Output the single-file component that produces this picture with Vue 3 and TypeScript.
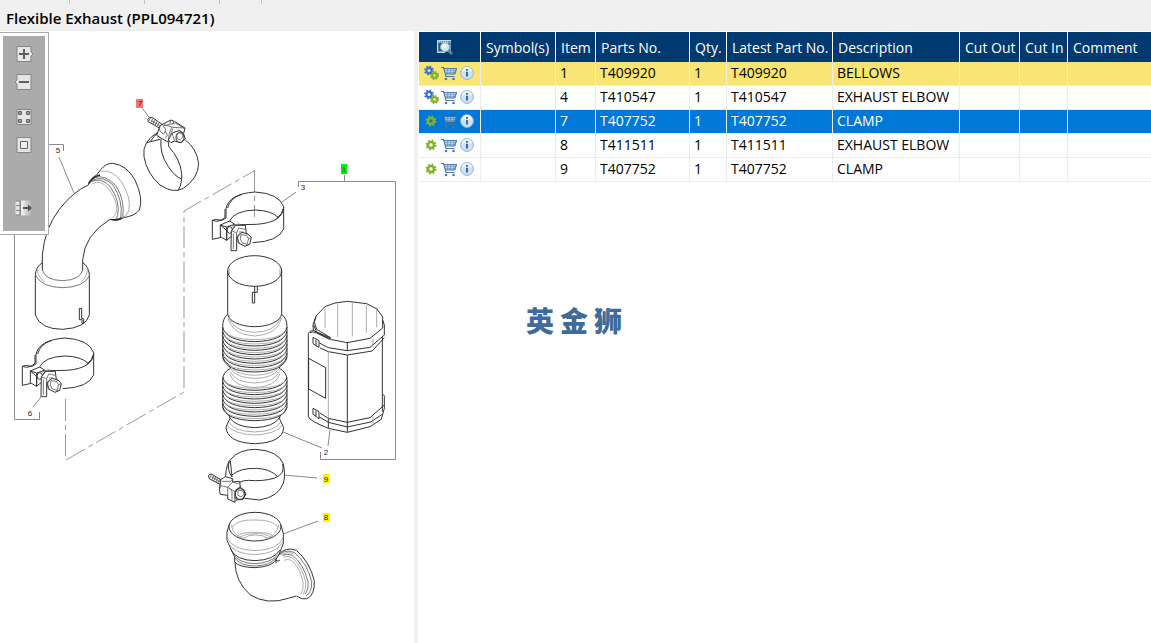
<script setup lang="ts">
interface Part {
  item: number
  part: string
  qty: number
  latest: string
  description: string
  assembly: boolean
  state: '' | 'marked' | 'selected'
}

const parts: Part[] = [
  { item: 1, part: 'T409920', qty: 1, latest: 'T409920', description: 'BELLOWS', assembly: true, state: 'marked' },
  { item: 4, part: 'T410547', qty: 1, latest: 'T410547', description: 'EXHAUST ELBOW', assembly: true, state: '' },
  { item: 7, part: 'T407752', qty: 1, latest: 'T407752', description: 'CLAMP', assembly: false, state: 'selected' },
  { item: 8, part: 'T411511', qty: 1, latest: 'T411511', description: 'EXHAUST ELBOW', assembly: false, state: '' },
  { item: 9, part: 'T407752', qty: 1, latest: 'T407752', description: 'CLAMP', assembly: false, state: '' },
]

const headings: string[] = [
  'Symbol(s)', 'Item', 'Parts No.', 'Qty.', 'Latest Part No.', 'Description', 'Cut Out', 'Cut In', 'Comment',
]

const watermark: string[] = ['英', '金', '狮']

// Depths of the bellows convolutions, in drawing units.
const upperRings: number[] = [246, 259, 272, 285, 298, 311, 324, 337]
const lowerRings: number[] = upperRings.map((y) => y + 150)
const clampOffsets: string[] = ['translate(0 320)', 'translate(190 174)']
</script>

<template>
  <div class="page">
    <header class="title-bar">
      <div class="tabs"><i class="tab first"></i><i class="tab"></i><i class="tab"></i><i class="tab short"></i></div>
      <h1>Flexible Exhaust (PPL094721)</h1>
    </header>

    <main class="split">
      <section class="drawing">
        <svg class="diagram" viewBox="0 31 414 612" role="img" aria-label="Exploded view of the flexible exhaust">
          <!-- assembly brackets and centre lines -->
          <g class="lead">
            <path d="M14.500 200V419.500H39.500V412M40 144.500H63.500V151M298.500 187V181.500H395.500V459.500H320.500V452M344.500 175V181" />
            <path d="M282 202L296 192M59 157L74 193M142 108L149 117M41 397L33 407M283 432L322 448M330 430L328 446M284 475L317 478M283 534L318 521" />
          </g>
          <g class="centre">
            <path d="M65.500 399V459" /><path d="M66 460L184 392V211L254 171" /><path d="M254.500 170V217" />
          </g>

          <!-- 7: clamp -->
          <g transform="translate(130 90) scale(.33333)">
            <path d="M82 128Q62 140 50 157Q38 178 42 200Q50 250 90 285Q130 312 160 295Q205 265 206 220Q200 175 166 150" />
            <path d="M93 146Q88 190 115 230Q135 260 155 267M116 152V170Q150 205 155 250Q157 280 145 300M50 158L90 148M82 128Q72 140 62 153" />
            <path class="body" d="M55 95Q50 88 59 82L69 84L98 104L88 114Z" />
            <path class="mid" d="M61 84L56 94M68 86L63 98M74 90L69 102M81 94L76 105M87 99L82 109M64 91L90 107" />
            <path class="body" d="M90 107L123 90L133 94L165 114L161 131L134 126L114 156L93 144L80 136Z" />
            <path class="mid" d="M98 108L136 99L164 116M102 104L129 112L165 114M126 111L118 130L114 156M90 110Q84 125 101 132L107 122Q108 112 98 109M133 94L127 102M123 90L119 101M105 122L112 135L106 145M129 116L121 134" />
            <path class="body" d="M126 130L148 121L160 130L166 147L151 158L134 153L123 158L115 150Z" />
            <ellipse cx="150" cy="142" rx="12" ry="16" /><path class="mid" d="M140 137L145 129L156 130L158 141L151 150L142 147ZM126 130L134 153" />
          </g>

          <!-- 5: elbow -->
          <g transform="translate(20 150) scale(.33333)">
            <path d="M67 360V315Q74 235 118 178Q158 126 205 105M188 362V330Q193 255 270 208" />
            <path d="M205 105Q208 87 230 75L243 58Q257 40 278 40Q320 45 345 90Q371 145 358 180Q345 198 310 203Q292 215 270 208" />
            <path class="heavy" d="M206 101Q216 82 240 75M273 208Q290 212 306 204" />
            <path class="mid" d="M210 97Q242 79 270 109Q302 155 293 196L288 208M216 91Q248 75 279 105Q311 154 302 204M225 82Q254 73 288 107Q316 152 308 203" />
            <path class="fine" d="M217 101Q242 88 265 115Q294 157 290 182Q287 197 278 204M243 64Q279 57 307 99Q335 147 326 183Q320 199 306 203" />
            <path d="M67 338Q46 352 46 377V495Q61 538 128 538Q198 534 208 495V372Q205 349 188 338" />
            <path class="mid" d="M67 360Q76 391 128 392Q180 390 188 361M46 375Q65 412 128 413Q190 412 208 378" />
            <path class="fine" d="M51 358Q57 386 75 396M203 356Q200 383 184 395" />
            <path d="M178 475H185V506H191V521H186V509H178Z" />
          </g>

          <!-- 6 and 3: clamps -->
          <g v-for="offset in clampOffsets" :key="offset" :transform="offset">
            <g transform="scale(.33333)">
              <path d="M108 132V105Q115 60 195 54Q267 58 281 98V165Q265 203 188 206M281 98Q280 145 200 151L150 152Q134 154 130 163M113 102Q120 72 156 61" />
              <path d="M118 142Q133 110 195 108Q243 109 266 131M260 134Q278 118 280 104" />
              <path class="body" d="M108 132Q98 142 88 138Q75 134 67 139V196L94 190L110 199V169L91 153L119 141" />
              <path d="M67 139Q80 145 93 139L105 130V105M91 153V190M119 141L136 152L130 170M91 153L110 159L133 151M110 159V199L123 188" />
              <ellipse cx="119" cy="168" rx="8" ry="10" />
              <path class="body" d="M124 171L137 154H166L169 180L140 187V230H123Z" /><path class="mid" d="M124 171L140 176V187M140 176L146 162L166 166M126 157L145 150L166 154M130 178V225" />
              <path class="body" d="M142 188L156 175L174 180L184 191L179 211L165 217L145 207Z" />
              <path class="mid" d="M153 182L169 184L176 194L171 211L157 207L151 195ZM169 184L174 180M176 194L184 191M171 211L179 211M149 178Q137 193 149 209M147 174H159" />
            </g>
          </g>

          <!-- 1: bellows -->
          <g transform="translate(210 245) scale(.33333)">
            <ellipse cx="134" cy="78" rx="81" ry="46" /><path class="fine" d="M58 70V90M210 70V90" />
            <path d="M53 78V205A81 40 0 0 0 215 205V78M134 124V142H127V174H134V142H142V124" />
            <path d="M53 208Q38 220 38 245V335Q42 351 58 360L61 370Q38 382 38 405V486Q42 501 58 512M215 208Q231 220 231 245V335Q227 351 211 360L208 370Q231 382 231 405V486Q227 501 211 512" />
            <path class="fine" d="M58 211V222Q75 260 134 262Q193 260 211 222V211M54 220Q66 270 134 273Q203 269 215 220" />
            <path v-for="y in upperRings" :key="y" :d="`M38 ${y}Q47 ${y + 42} 134 ${y + 44}Q221 ${y + 42} 231 ${y}`" />
            <path v-for="y in upperRings" :key="'f' + y" class="fine" :d="`M43 ${y + 12}Q60 ${y + 37} 134 ${y + 38}Q208 ${y + 37} 226 ${y + 12}`" />
            <path class="fine" d="M58 359Q72 389 134 391Q196 389 211 359M61 370Q77 399 134 400Q191 399 208 370M61 380Q75 412 134 414Q195 412 208 380M59 386Q72 426 134 428Q197 426 210 386" />
            <path v-for="y in lowerRings" :key="'l' + y" :d="`M38 ${y}Q47 ${y + 38} 134 ${y + 40}Q221 ${y + 38} 231 ${y}`" />
            <path v-for="y in lowerRings" :key="'g' + y" class="fine" :d="`M43 ${y + 12}Q60 ${y + 33} 134 ${y + 34}Q208 ${y + 33} 226 ${y + 12}`" />
            <path d="M58 511L60 520L48 546Q51 593 134 596Q218 593 221 548L208 520L211 511M59 518Q77 546 134 548Q190 546 209 518" />
            <path class="fine" d="M55 530Q72 559 134 561Q197 559 213 530M51 541Q70 567 134 570Q199 567 217 541" />
          </g>

          <!-- 2: heat shield -->
          <g transform="translate(210 245) scale(.33333)">
            <path d="M310 257L309 239L318 213L345 185L375 174L412 169L470 176L501 192L518 216V249L480 280L412 293L365 284L320 262L311 240M318 215L313 232L320 253L362 278" />
            <path d="M295 268Q296 257 311 257L362 279M295 268V515Q298 527 355 550L412 562L480 545L514 523L523 490V452L517 447M300 263Q306 258 320 264L361 284" />
            <path d="M518 225L523 240V270L480 307L412 317L355 308L328 294M523 278L487 318L412 330L355 320L330 309M517 275V500M412 293V317" />
            <path d="M330 504L355 520L412 532L480 518L523 480M328 516L355 532L412 546L482 531L518 507M412 530V562M355 520V550" />
            <path d="M309 277V296L318 302M309 277L327 287V307L318 302V284M309 490V508L318 514M309 490L327 500V522L318 514V497" />
            <path class="fine" d="M345 190V250M383 176V276M427 172V274M469 180V264M500 193V247M355 321V520M489 281V308M489 514V541" />
            <path d="M412 330V531" />
            <path d="M296 340L347 368V460L296 432Z" />
          </g>

          <!-- 9: clamp -->
          <g transform="translate(200 440) scale(.33333)">
            <path d="M77 110Q78 72 93 57Q118 28 167 28Q235 32 250 72Q257 105 250 130Q235 170 180 180L133 175M248 72Q256 102 224 114Q190 125 145 121Q128 121 115 129M96 105Q120 84 170 85Q210 87 231 108M88 63Q80 90 96 111M91 62Q93 81 96 111" />
            <path class="body" d="M25 108Q28 99 36 103L62 119V134L29 117Z" />
            <path class="mid" d="M34 105L29 115M41 108L36 119M47 111L42 122M53 114L48 126M59 118L54 130M34 110L60 125" />
            <path class="body" d="M62 119L76 110L98 116V126L119 124L122 148L105 155V187L83 177V166L61 163L58 150Z" />
            <path class="mid" d="M62 119V137L83 142L98 126M62 137L58 150M83 142V177M83 142L105 155L121 138M98 116L92 124H65M98 126L118 132M88 146L96 153V182M105 187L114 175" />
            <path class="body" d="M108 149L121 142L132 150L138 162L129 178L112 180L105 169Z" /><ellipse cx="120" cy="162" rx="14" ry="16" /><path class="mid" d="M114 151L127 152L133 162L124 171L114 166Z" />
          </g>

          <!-- 8: elbow -->
          <g transform="translate(200 440) scale(.33333)">
            <ellipse cx="165" cy="260" rx="78" ry="43" /><path class="fine" d="M94 255Q100 288 135 298M236 255Q230 288 195 298" />
            <path d="M87 255Q78 276 81 301L97 337L104 350V366Q118 382 165 383Q215 380 226 361L237 344L250 310V280L243 255" />
            <path class="fine" d="M96 262Q110 238 165 240Q220 239 234 262M110 289Q130 275 165 277Q203 275 220 289M118 292Q139 279 165 281Q195 279 213 292M128 296Q146 284 165 285Q188 284 205 295" />
            <path class="fine" d="M81 292Q95 330 165 332Q236 330 250 292M83 306Q100 342 165 344Q232 340 248 306" />
            <path d="M92 328Q108 361 165 362Q222 360 240 330" />
            <path class="mid" d="M98 340Q115 370 165 371Q214 368 233 345M104 354Q120 377 165 378Q210 376 225 356" />
            <path d="M105 366Q105 424 151 465Q202 496 265 475L290 468M228 353V370M228 361Q235 366 240 360M235 345Q256 319 289 331Q329 365 343 422Q345 466 321 476Q307 480 291 469" />
            <path class="mid" d="M241 342Q258 327 284 338Q321 370 335 424Q337 456 318 468M247 346Q261 339 278 346Q310 371 324 425Q326 451 315 462" />
            <path class="fine" d="M250 352Q267 345 282 358Q307 382 317 426Q319 448 310 463M252 361Q269 354 281 367Q300 386 309 426Q312 446 303 463M241 344Q260 334 281 340" />
          </g>

          <!-- callout numbers -->
          <rect x="136" y="99" width="7" height="9" fill="#f77474" /><rect x="341" y="164" width="6" height="10" fill="#00f400" />
          <rect x="323" y="474" width="7" height="9" fill="#fff200" /><rect x="323" y="513" width="7" height="9" fill="#fff200" />
          <g class="numbers">
            <text x="58" y="153">5</text><text x="30" y="416">6</text><text x="303" y="190">3</text><text x="326" y="455">2</text>
            <text x="140" y="106">7</text><text x="344" y="172">1</text><text x="326" y="482">9</text><text x="326" y="520">8</text>
          </g>
        </svg>

        <div class="tool-frame">
          <div class="tools" role="toolbar" aria-label="Drawing tools">
            <div class="tool-group">
              <button type="button" aria-label="Zoom in">
                <svg viewBox="0 0 17 16"><path class="tile" d="M1 .500H15V6L17 8L15 10V15.500H1Z" /><path class="glyph" d="M3 8H13M8 3V13" /></svg>
              </button>
              <button type="button" aria-label="Zoom out">
                <svg viewBox="0 0 17 16"><path class="tile" d="M1 .500H15V15.500H1V10L-1 8L1 6Z" /><path class="glyph" d="M3 8H13" /></svg>
              </button>
            </div>
            <div class="tool-group">
              <button type="button" aria-label="Show all">
                <svg viewBox="0 0 17 16"><path class="tile" d="M1 .500H15V15.500H1Z" /><path class="box" d="M2.500 2.500H5.500V5.500H2.500ZM10.500 2.500H13.500V5.500H10.500ZM2.500 10.500H5.500V13.500H2.500ZM10.500 10.500H13.500V13.500H10.500Z" /></svg>
              </button>
              <button type="button" aria-label="Fit to window">
                <svg viewBox="0 0 17 16"><path class="tile" d="M1 .500H15V15.500H1Z" /><path d="M4.500 4.500H11.500V11.500H4.500Z" fill="#eee" stroke="#666" /></svg>
              </button>
            </div>
            <div class="tool-group last">
              <button type="button" aria-label="Hide panel">
                <svg viewBox="0 0 17 16">
                  <defs><linearGradient id="fade"><stop offset="0" stop-color="#f4f4f4" /><stop offset="1" stop-color="#ababab" /></linearGradient></defs>
                  <path d="M5 .500H16V15.500H5Z" fill="url(#fade)" /><path d="M-.500 1H4V15H-.500M0 5.500H4M0 10.500H4M4.500 .500V15.500" fill="#e4e4e4" stroke="#888" />
                  <path d="M7 8H14" stroke="#555" stroke-width="2" /><path d="M12 4.500L16 8L12 11.500Z" fill="#555" />
                </svg>
              </button>
            </div>
          </div>
        </div>
      </section>

      <section class="list">
        <table>
          <colgroup>
            <col class="w-icons" /><col class="w-symbols" /><col class="w-item" /><col class="w-part" /><col class="w-qty" />
            <col class="w-latest" /><col class="w-description" /><col class="w-out" /><col class="w-in" /><col />
          </colgroup>
          <thead>
            <tr>
              <th class="search">
                <button type="button" aria-label="Search parts">
                  <svg width="18" height="18" viewBox="0 0 18 18">
                    <path d="M1 2H15V14H1Z" fill="#6f9db5" /><path d="M2.500 5H13.500V13H2.500Z" fill="#1f5d85" />
                    <path d="M1.500 2V14.500H9M1 2.500H15" fill="none" stroke="#c5dce8" /><path d="M3 4H12" stroke="#f4fafc" stroke-dasharray="1 1" />
                    <path d="M12 12L16 16" stroke="#5f8aa3" stroke-width="2.500" /><circle cx="9" cy="9" r="4.500" fill="#d9e2e8" stroke="#8fb0c2" /><circle cx="8" cy="8" r="2" fill="#fff" />
                  </svg>
                </button>
              </th>
              <th v-for="heading in headings" :key="heading">{{ heading }}</th>
            </tr>
          </thead>
          <tbody>
            <tr v-for="row in parts" :key="row.item" :class="row.state">
              <td class="icons">
                <div class="actions">
                  <svg v-if="row.assembly" width="15" height="16" viewBox="0 0 15 16" aria-label="Assembly">
                    <g fill="none" stroke="#3b70cf"><circle cx="5" cy="5.500" r="2.600" stroke-width="2.200" /><circle cx="5" cy="5.500" r="4.200" stroke-width="1.500" stroke-dasharray="1.650 1.650" /></g>
                    <g fill="none" stroke="#83ae2e"><circle cx="10.500" cy="10.500" r="2.400" stroke-width="2.200" /><circle cx="10.500" cy="10.500" r="3.900" stroke-width="1.500" stroke-dasharray="1.530 1.530" /></g>
                  </svg>
                  <svg v-else width="15" height="16" viewBox="0 0 15 16" aria-label="Part">
                    <g fill="none" stroke="#83b32c"><circle cx="7" cy="8" r="3" stroke-width="2.600" /><circle cx="7" cy="8" r="4.600" stroke-width="1.800" stroke-dasharray="1.806 1.806" /></g>
                  </svg>
                  <button type="button" aria-label="Add to cart">
                    <svg class="cart" width="16" height="16" viewBox="0 0 16 16">
                      <path d="M3 3.500H15L13.500 9H4.800Z" fill="#c3d6ea" /><path d="M3.500 5.500H14.500M4.500 7.500H14M6.500 3.500V9M9.500 3.500V9M12.500 3.500V9" fill="none" stroke="#6f97c4" stroke-width=".7" />
                      <path class="rail" d="M0 2.500H2.500L5 11.500H13.500M3 3.500H15.500L13.800 9H4.500" />
                      <circle cx="5" cy="14" r="1.300" fill="#4f79a8" /><circle cx="12.500" cy="14" r="1.300" fill="#4f79a8" />
                    </svg>
                  </button>
                  <button type="button" aria-label="Part information">
                    <svg width="14" height="14" viewBox="0 0 14 14"><circle cx="7" cy="7" r="6.400" fill="#cfe2f1" stroke="#91b5d3" /><path d="M2 6A5 5 0 0 1 12 6Q7 3.500 2 6" fill="#eef6fb" /><path d="M7 6V10.500M7 3V4.800" stroke="#3a6aa0" stroke-width="2" /></svg>
                  </button>
                </div>
              </td>
              <td></td>
              <td>{{ row.item }}</td>
              <td>{{ row.part }}</td>
              <td>{{ row.qty }}</td>
              <td>{{ row.latest }}</td>
              <td>{{ row.description }}</td>
              <td></td>
              <td></td>
              <td></td>
            </tr>
          </tbody>
        </table>
        <p class="watermark"><span v-for="glyph in watermark" :key="glyph">{{ glyph }}</span></p>
      </section>
    </main>
  </div>
</template>

<style>
body { margin: 0; }
</style>

<style scoped>
.page { display: flex; flex-direction: column; min-height: 100vh; background: #fff; color: #000; font-family: "Open Sans", "Noto Sans", sans-serif; font-size: 14px; }
.title-bar { height: 31px; background: #f0f0f0; }
.tabs { display: flex; height: 4px; }
.tab { box-sizing: border-box; width: 75px; border-right: 1px solid #c3c3c6; }
.tab.first { width: 70px; }
.tab.short { width: 42px; }
h1 { margin: 0; padding-left: 6px; font-size: 15px; line-height: 29px; font-weight: 600; }
.split { display: flex; flex: 1; }
.drawing { position: relative; flex: 0 0 414px; border-right: 4px solid #f0f0f0; }
.diagram { display: block; width: 100%; }
.diagram path, .diagram ellipse { fill: none; stroke: #333; stroke-width: 1; vector-effect: non-scaling-stroke; }
.diagram .body { fill: #fff; }
.diagram .mid { stroke: #555; stroke-width: .8; }
.diagram .fine { stroke: #999; stroke-width: .8; }
.diagram .heavy { stroke: #222; stroke-width: 1.4; }
.diagram .lead path { stroke: #8a8a8a; }
.diagram .centre path { stroke: #999; stroke-dasharray: 22 4 5 4; }
.numbers { font: 8px "Liberation Sans", sans-serif; fill: #222; text-anchor: middle; }

.tool-frame { position: absolute; top: 1px; left: 0; padding: 3px; border: solid #a9a9a9; border-width: 1px 1px 1px 0; background: #fff; }
.tools { box-sizing: border-box; width: 42px; padding: 10px 0 15px 13px; background: #ababab; }
.tool-group { display: flex; flex-direction: column; gap: 12px; margin-bottom: 19px; }
.tool-group.last { margin: 47px 0 0; }
button { display: block; padding: 0; border: 0; background: none; }
button svg { display: block; }
.tools button, .tools svg { width: 17px; height: 16px; overflow: visible; }
.tile { fill: #e6e6e6; stroke: #858585; }
.glyph { stroke: #5e5e5e; stroke-width: 2; }
.box { fill: #999; stroke: #666; }

.list { flex: 1; min-width: 0; padding: 1px 0 0 1px; }
table { width: 100%; table-layout: fixed; border-collapse: separate; border-spacing: 0; }
.w-icons { width: 62px; }
.w-symbols { width: 75px; }
.w-item { width: 40px; }
.w-part { width: 94px; }
.w-qty { width: 37px; }
.w-latest { width: 106px; }
.w-description { width: 127px; }
.w-out { width: 60px; }
.w-in { width: 48px; }
th, td { box-sizing: border-box; overflow: hidden; text-align: left; white-space: nowrap; border-right: 1px solid #ececec; }
th { height: 30px; padding: 0 0 0 5px; background: #003a70; color: #fff; font-weight: 400; border-color: #fff; }
td { height: 24px; padding: 0 0 2px 4px; line-height: 20px; border-bottom: 1px solid #ececec; }
th:last-child, td:last-child { border-right: 0; }
.search { padding-left: 17px; }
.marked td { background: #f8e573; }
.selected td { background: #0078d7; color: #fff; }
.cart .rail { fill: none; stroke: #4f79a8; stroke-width: 1.2; }
.selected .cart { opacity: .75; }
.selected .cart .rail { stroke: #5a7085; }
td.icons { padding: 0 0 2px 5px; }
.actions { display: flex; align-items: center; gap: 2px; }
.actions button:last-child { margin-left: 1px; }
.watermark { display: flex; gap: 6px; margin: 119px 0 0 107px; color: #3f6b99; font: 900 28px/38px "Noto Sans CJK SC", sans-serif; }
</style>
